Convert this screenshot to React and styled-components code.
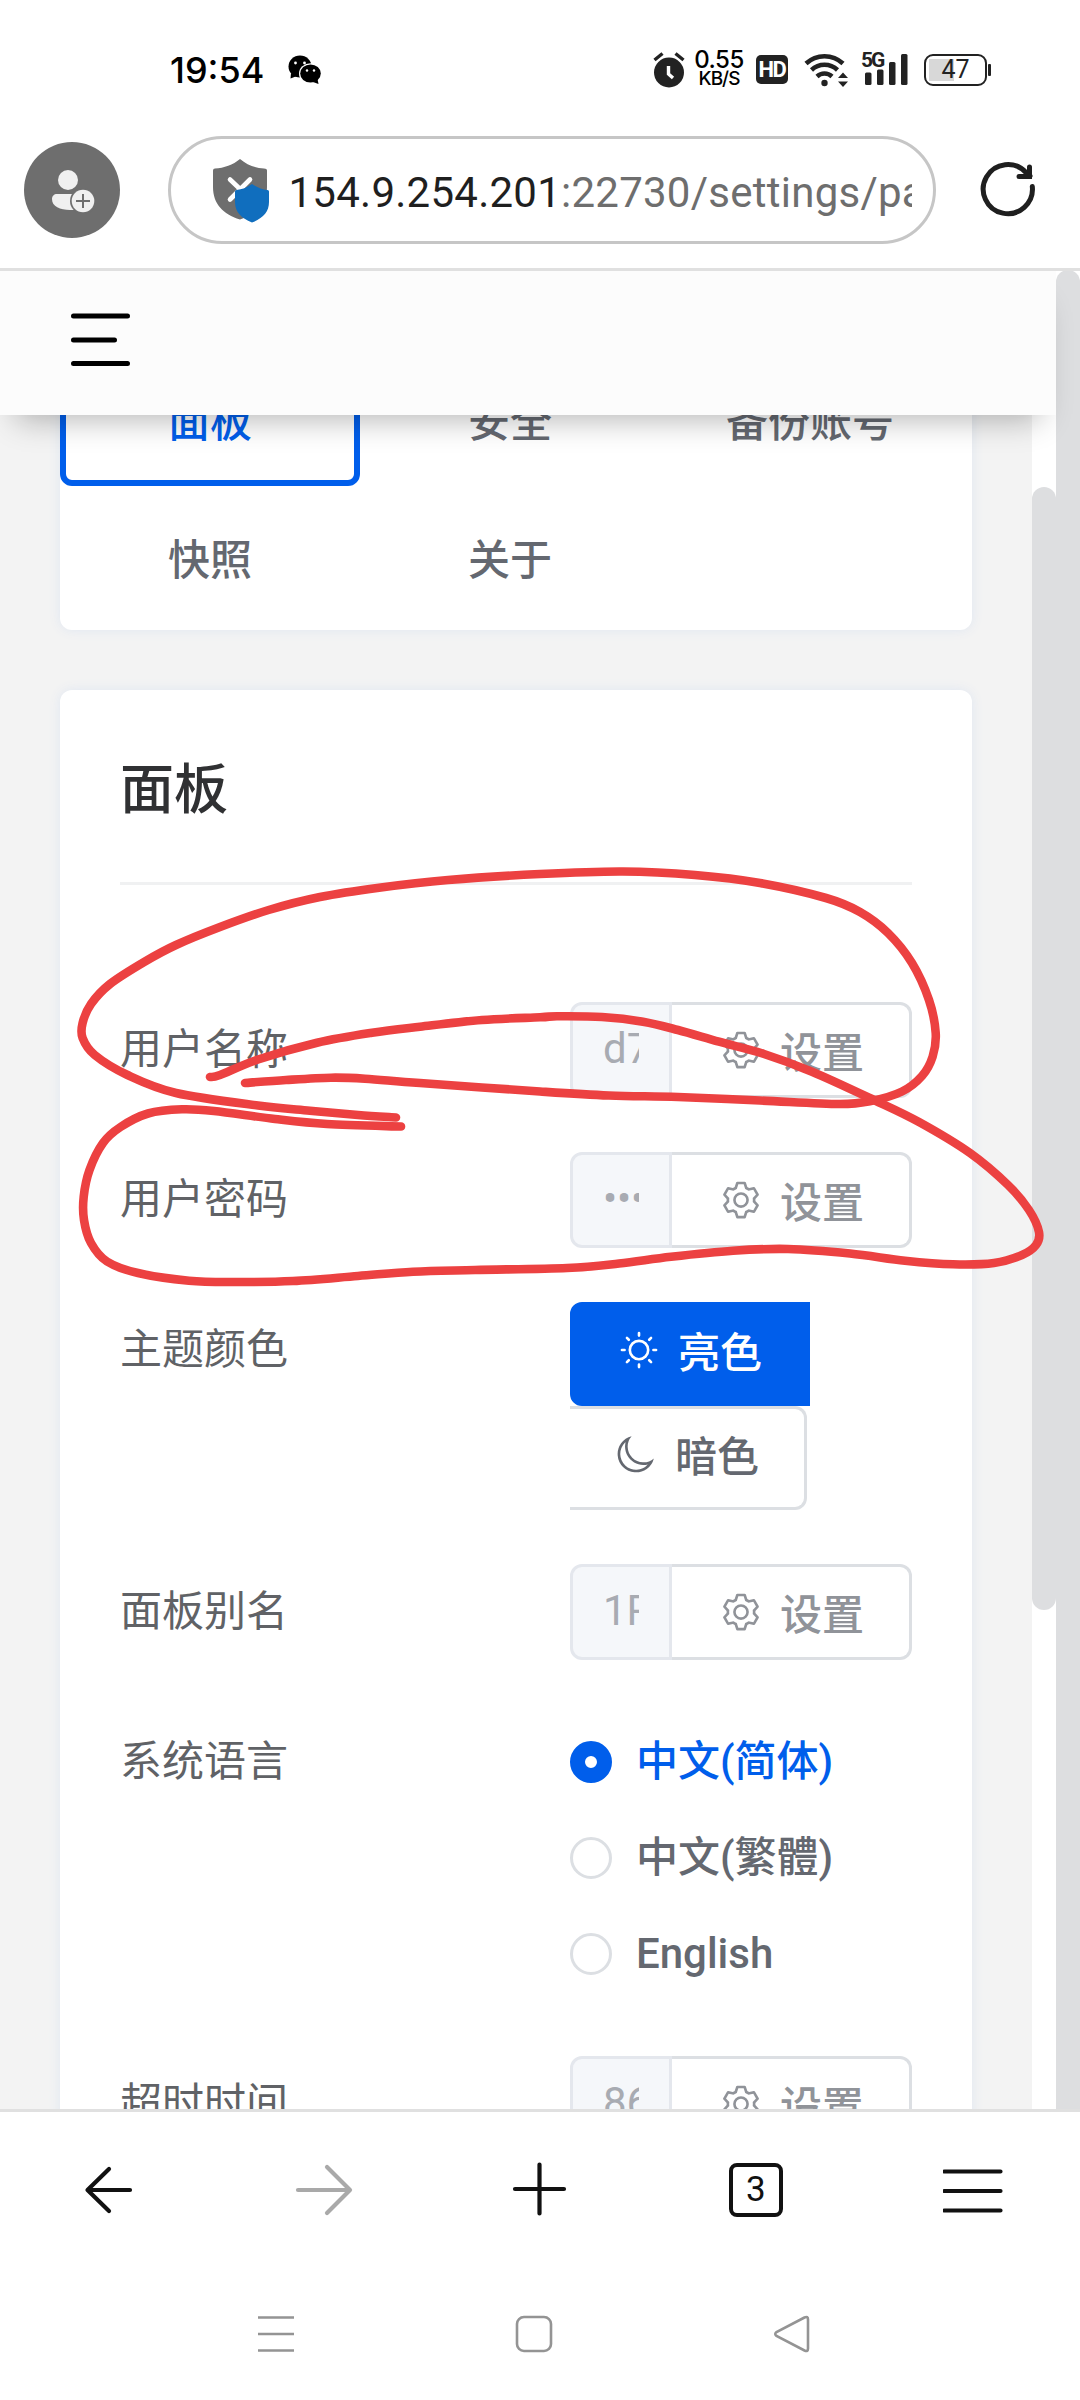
import React, { Fragment } from 'react';
import styled, { createGlobalStyle } from 'styled-components';

const SETTING =
    'M600.704 64a32 32 0 0 1 30.464 22.208l35.2 109.376c14.784 7.232 28.928 15.36 42.432 24.512l112.384-24.192a32 32 0 0 1 34.432 15.36L944.32 364.8a32 32 0 0 1-4.032 37.504l-77.12 85.12a357.12 357.12 0 0 1 0 49.024l77.12 85.248a32 32 0 0 1 4.032 37.504l-88.704 153.6a32 32 0 0 1-34.432 15.296L708.8 803.904c-13.44 9.088-27.648 17.28-42.368 24.512l-35.264 109.376A32 32 0 0 1 600.704 960H423.296a32 32 0 0 1-30.464-22.208L357.696 828.48a351.616 351.616 0 0 1-42.56-24.64l-112.32 24.256a32 32 0 0 1-34.432-15.36L79.68 659.2a32 32 0 0 1 4.032-37.504l77.12-85.248a357.12 357.12 0 0 1 0-48.896l-77.12-85.248A32 32 0 0 1 79.68 364.8l88.704-153.6a32 32 0 0 1 34.432-15.296l112.32 24.256c13.568-9.152 27.776-17.408 42.56-24.64l35.2-109.312A32 32 0 0 1 423.232 64H600.64zm-23.424 64H446.72l-36.352 113.088-24.512 11.968a294.113 294.113 0 0 0-34.816 20.096l-22.656 15.36-116.224-25.088-65.28 113.152 79.68 88.192-1.92 27.136a293.12 293.12 0 0 0 0 40.192l1.92 27.136-79.808 88.192 65.344 113.152 116.224-25.024 22.656 15.296a294.113 294.113 0 0 0 34.816 20.096l24.512 11.968L446.72 896h130.688l36.48-113.152 24.448-11.904a288.282 288.282 0 0 0 34.752-20.096l22.592-15.296 116.288 25.024 65.28-113.152-79.744-88.192 1.92-27.136a293.12 293.12 0 0 0 0-40.256l-1.92-27.136 79.808-88.128-65.344-113.152-116.288 24.96-22.592-15.232a287.616 287.616 0 0 0-34.752-20.096l-24.448-11.904L577.344 128zM512 320a192 192 0 1 1 0 384 192 192 0 0 1 0-384zm0 64a128 128 0 1 0 0 256 128 128 0 0 0 0-256z';
const SUNNY =
    'M512 704a192 192 0 1 0 0-384 192 192 0 0 0 0 384zm0 64a256 256 0 1 1 0-512 256 256 0 0 1 0 512zm0-704a32 32 0 0 1 32 32v64a32 32 0 0 1-64 0V96a32 32 0 0 1 32-32zm0 768a32 32 0 0 1 32 32v64a32 32 0 1 1-64 0v-64a32 32 0 0 1 32-32zM195.2 195.2a32 32 0 0 1 45.248 0l45.248 45.248a32 32 0 1 1-45.248 45.248L195.2 240.448a32 32 0 0 1 0-45.248zm543.104 543.104a32 32 0 0 1 45.248 0l45.248 45.248a32 32 0 0 1-45.248 45.248l-45.248-45.248a32 32 0 0 1 0-45.248zM64 512a32 32 0 0 1 32-32h64a32 32 0 0 1 0 64H96a32 32 0 0 1-32-32zm768 0a32 32 0 0 1 32-32h64a32 32 0 1 1 0 64h-64a32 32 0 0 1-32-32zM195.2 828.8a32 32 0 0 1 0-45.248l45.248-45.248a32 32 0 0 1 45.248 45.248L240.448 828.8a32 32 0 0 1-45.248 0zm543.104-543.104a32 32 0 0 1 0-45.248l45.248-45.248a32 32 0 0 1 45.248 45.248l-45.248 45.248a32 32 0 0 1-45.248 0z';
const MOON =
    'M240.448 240.448a384 384 0 1 0 559.424 525.696 448 448 0 0 1-542.016-542.08 390.592 390.592 0 0 0-17.408 16.384zm181.056 362.048a384 384 0 0 0 525.632 16.384A448 448 0 1 1 405.056 76.8a384 384 0 0 0 16.448 525.696z';

// pen strokes drawn over the two account rows
const strokeName = [
    [245, 1083], [286, 1080], [331, 1077.7], [365, 1078.7], [420, 1083], [540, 1091.5], [609, 1095.5],
    [678, 1097], [760, 1100.5], [839, 1104], [871, 1101], [902, 1091.5], [922, 1076], [932.6, 1056.7],
    [935.7, 1033], [929, 1000], [912, 963], [888, 933], [860, 912], [826, 898], [760, 883], [695, 875],
    [623, 871.5], [540, 874], [448, 880], [379, 887.7], [320, 897], [268.6, 910], [220, 927], [176, 945],
    [145, 961.5], [110, 984], [91, 1004], [82.6, 1023], [82.6, 1038], [94.7, 1055], [127.5, 1075],
    [176, 1093], [258, 1105.5], [310, 1110.7], [358, 1115], [396, 1117.5],
];
const strokePassword = [
    [210, 1077], [220, 1075], [258, 1059.5], [317, 1042.7], [372, 1032.7], [420, 1026.7], [482, 1020],
    [540, 1017.3], [557, 1016.3], [602, 1017], [643, 1021.7], [678, 1030], [719, 1041.7], [764, 1054],
    [812, 1071.7], [874, 1100], [919, 1122], [970, 1153], [1008, 1185], [1029, 1210], [1039, 1232],
    [1036, 1245], [1022, 1255], [994, 1263], [953, 1264.3], [905, 1260.7], [850, 1253.5], [788, 1249],
    [733, 1250.7], [671, 1256.7], [619, 1263.5], [567, 1268], [475, 1270], [413, 1271.7], [358, 1276],
    [293, 1281], [234, 1282], [189, 1280.7], [138, 1273], [107, 1261.5], [91, 1243], [84, 1220],
    [83.7, 1196.7], [89.5, 1170], [103, 1143], [120.5, 1127], [148, 1113.5], [182, 1109.3], [214, 1111],
    [275, 1119], [327, 1124], [401, 1126.5],
];

const smooth = (pts) => {
    let d = `M${pts[0].join(' ')}`;
    for (let i = 0; i < pts.length - 1; i++) {
        const a = pts[i - 1] || pts[i];
        const b = pts[i];
        const c = pts[i + 1];
        const e = pts[i + 2] || c;
        d += `C${b[0] + (c[0] - a[0]) / 6} ${b[1] + (c[1] - a[1]) / 6} ${c[0] - (e[0] - b[0]) / 6} ${c[1] - (e[1] - b[1]) / 6} ${c[0]} ${c[1]}`;
    }
    return d;
};

const ElIcon = ({ d }) => (
    <svg width="42" height="42" viewBox="0 0 1024 1024" fill="currentColor">
        <path d={d} />
    </svg>
);

const Setter = ({ value, masked }) => (
    <InputGroup>
        <InputBox>
            <InputText $masked={masked}>{value}</InputText>
        </InputBox>
        <Append>
            <ElIcon d={SETTING} />
            <span>设置</span>
        </Append>
    </InputGroup>
);

const StatusIcons = () => (
    <Fragment>
        <svg width="32" height="36" viewBox="0 0 32 36">
            <circle cx="16" cy="20.500" r="15" fill="#222" />
            <path d="M1.500 8 9.500 1.500M30.500 8 22.500 1.500" stroke="#222" strokeWidth="3.400" />
            <path d="M15.500 14v8l4.500 4" stroke="#fff" strokeWidth="3.400" fill="none" />
        </svg>
        <Speed>
            <b>0.55</b>
            <small>KB/S</small>
        </Speed>
        <Hd>HD</Hd>
        <Wifi width="45" height="36" viewBox="0 0 45 36">
            <g fill="none" stroke="#222" strokeWidth="4.500">
                <path d="M2 11.500a27 27 0 0 1 37 0" />
                <path d="M7.500 18a19 19 0 0 1 26 0" />
                <path d="M13 24.500a11 11 0 0 1 15 0" />
            </g>
            <circle cx="20.500" cy="31" r="3.200" fill="#222" />
            <path d="M34 26l5-5.500 5 5.500zM34 29.500h10l-5 5.500z" fill="#222" />
        </Wifi>
        <Signal>
            <em>5G</em>
            <svg width="44" height="31" viewBox="0 0 44 31" fill="#222">
                <rect x="0" y="18.500" width="6.500" height="12.500" rx="1.500" />
                <rect x="12" y="15.500" width="6.500" height="15.500" rx="1.500" />
                <rect x="24" y="8" width="6.500" height="23" rx="1.500" />
                <rect x="36" y="0" width="6.500" height="31" rx="1.500" />
            </svg>
        </Signal>
        <Battery>
            <span>47</span>
        </Battery>
    </Fragment>
);

const App = () => {
    return (
        <Fragment>
            <GlobalStyle />
            <Phone>
                <StatusBar>
                    <Clock>19:54</Clock>
                    <WeChat width="34" height="30" viewBox="0 0 34 30">
                        <path d="M3 18 2.500 23.500 9 21z" />
                        <ellipse cx="12" cy="11.500" rx="11.500" ry="11" />
                        <ellipse cx="22.500" cy="18.500" rx="11.500" ry="10.300" fill="#fff" />
                        <path d="M25 27l5.500 2-1-5z" />
                        <ellipse cx="22.500" cy="18.500" rx="10.300" ry="9.100" />
                        <g fill="#fff">
                            <circle cx="7.500" cy="8" r="1.400" />
                            <circle cx="16.500" cy="8" r="1.400" />
                            <circle cx="19" cy="15.500" r="1.200" />
                            <circle cx="26" cy="15.500" r="1.200" />
                        </g>
                    </WeChat>
                    <StatusIcons />
                </StatusBar>

                <AddressBar>
                    <Avatar>
                        <svg width="96" height="96" viewBox="0 0 96 96">
                            <circle cx="44" cy="38" r="10" fill="#f0f0f0" />
                            <path d="M33 52h26v16H46c-10 0-18-3.500-18-11 0-3 2-5 5-5z" fill="#f0f0f0" />
                            <circle cx="59" cy="59" r="13" fill="#6e6e6e" />
                            <circle cx="59" cy="59" r="11.300" fill="#f0f0f0" />
                            <path d="M59 52v14M52 59h14" stroke="#6e6e6e" strokeWidth="2" />
                        </svg>
                    </Avatar>
                    <UrlPill>
                        <svg width="58" height="66" viewBox="0 0 58 66">
                            <path d="M27 0c7 6 15 9 24 9.500q3 0 3 2V28c0 17-10 27-27 32.500C10 55 0 45 0 28V11.500q0-2 2-2C11 9 20 6 27 0z" fill="#6e6e6e" />
                            <path d="M17 20.500l20 19M37 20.500l-20 20" stroke="#fff" strokeWidth="4.600" strokeLinecap="round" />
                            <path d="M39 25c5 3.500 10 5.500 15.500 6q1.500 0 1.500 1.500V43c0 10-6 16-17 20.500C28 59 22 53 22 43V32.500q0-1.500 1.500-1.500c5.500-.5 10.500-2.500 15.500-6z" fill="#106ebe" />
                        </svg>
                        <Url>
                            154.9.254.201<i>:22730/settings/panel</i>
                        </Url>
                    </UrlPill>
                    <svg width="60" height="60" viewBox="0 0 60 60" fill="none" stroke="#1f1f1f" strokeWidth="5" strokeLinecap="round">
                        <path d="M54.300 26.500A24.600 24.600 0 1 1 48 12.500L52 16" />
                        <path d="M51.500 7V16.500H41" strokeLinejoin="miter" />
                    </svg>
                </AddressBar>

                <Viewport>
                    <Main>
                        <PageHeader>
                            <svg width="60" height="54" viewBox="0 0 60 54" stroke="#000" strokeWidth="5" strokeLinecap="round">
                                <path d="M2.500 3h54M2.500 27h41M2.500 50.500h54" />
                            </svg>
                        </PageHeader>
                        <Scroller>
                            <Content>
                                <TabCard>
                                    <Tab $active>面板</Tab>
                                    <Tab>安全</Tab>
                                    <Tab>备份账号</Tab>
                                    <Tab>快照</Tab>
                                    <Tab>关于</Tab>
                                </TabCard>
                                <Card>
                                    <h2>面板</h2>
                                    <FormRow>
                                        <label>用户名称</label>
                                        <Setter value="d7a" />
                                    </FormRow>
                                    <FormRow>
                                        <label>用户密码</label>
                                        <Setter value="••••" masked />
                                    </FormRow>
                                    <FormRow>
                                        <label>主题颜色</label>
                                        <div>
                                            <ThemeButton $active>
                                                <ElIcon d={SUNNY} />
                                                <span>亮色</span>
                                            </ThemeButton>
                                            <ThemeButton>
                                                <ElIcon d={MOON} />
                                                <span>暗色</span>
                                            </ThemeButton>
                                        </div>
                                    </FormRow>
                                    <FormRow>
                                        <label>面板别名</label>
                                        <Setter value="1Panel" />
                                    </FormRow>
                                    <FormRow>
                                        <label>系统语言</label>
                                        <div>
                                            <Radio $checked>中文(简体)</Radio>
                                            <Radio>中文(繁體)</Radio>
                                            <Radio>English</Radio>
                                        </div>
                                    </FormRow>
                                    <FormRow>
                                        <label>超时时间</label>
                                        <Setter value="86400" />
                                    </FormRow>
                                </Card>
                            </Content>
                            <Track>
                                <Thumb />
                            </Track>
                        </Scroller>
                    </Main>
                    <OuterThumb />
                </Viewport>

                <Toolbar>
                    <svg width="60" height="60" viewBox="0 0 60 60" stroke="#111">
                        <path d="M31 9 9.500 30 31 51M10 30h42" />
                    </svg>
                    <svg width="60" height="60" viewBox="0 0 60 60" stroke="#a9a9a9">
                        <path d="M33 7 56 30 33 53M55 30H4" />
                    </svg>
                    <svg width="60" height="60" viewBox="0 0 60 60" stroke="#111">
                        <path d="M28.500 4.500v49M4 29h49" />
                    </svg>
                    <TabCount>3</TabCount>
                    <svg width="60" height="60" viewBox="0 0 60 60" stroke="#111">
                        <path d="M1.500 11.500h56M1.500 31h56M1.500 50.500h56" />
                    </svg>
                </Toolbar>

                <SystemNav>
                    <svg width="40" height="40" viewBox="0 0 40 40">
                        <path d="M2 3.500h36M2 20h36M2 36.500h36" />
                    </svg>
                    <svg width="40" height="40" viewBox="0 0 40 40">
                        <rect x="3" y="3" width="34" height="34" rx="7" />
                    </svg>
                    <svg width="40" height="40" viewBox="0 0 40 40">
                        <path d="M32.500 3.500 4.500 18q-2.500 2 0 4L32.500 36.500q3.500 1.500 3.500-2V5.500q0-3.500-3.500-2z" />
                    </svg>
                </SystemNav>

                <Ink width="1080" height="2400" viewBox="0 0 1080 2400">
                    <path d={smooth(strokeName)} />
                    <path d={smooth(strokePassword)} />
                </Ink>
            </Phone>
        </Fragment>
    );
};

const GlobalStyle = createGlobalStyle`
    *, *::before, *::after {
        box-sizing: border-box;
    }
    body {
        margin: 0;
        background: #fff;
        font-family: Roboto, "Noto Sans CJK SC", sans-serif;
    }
    svg {
        display: block;
        flex-shrink: 0;
    }
`;

const Phone = styled.div`
    position: relative;
    width: 1080px;
    height: 2400px;
    display: flex;
    flex-direction: column;
    overflow: hidden;
    background: #fff;
`;

const StatusBar = styled.div`
    height: 112px;
    padding: 27px 89px 0 170px;
    display: flex;
    align-items: center;
`;

const Clock = styled.div`
    width: 118px;
    font-family: Inter, sans-serif;
    font-size: 36px;
    font-weight: 500;
    color: #000;
`;

const WeChat = styled.svg`
    margin-right: auto;
`;

const Speed = styled.div`
    display: flex;
    flex-direction: column;
    align-items: center;
    gap: 1px;
    width: 52px;
    margin-left: 8px;
    font-family: Inter, sans-serif;
    color: #000;

    b {
        font-size: 24px;
        line-height: 18px;
        font-weight: 500;
        letter-spacing: -0.5px;
    }
    small {
        font-size: 19px;
        line-height: 18px;
        font-weight: 500;
        letter-spacing: -1px;
    }
`;

const Hd = styled.div`
    width: 32px;
    height: 29px;
    margin-left: 11px;
    border-radius: 5px;
    background: #222;
    color: #fff;
    font-size: 22px;
    font-weight: 700;
    line-height: 30px;
    text-align: center;
    letter-spacing: -1.5px;
`;

const Wifi = styled.svg`
    margin-left: 16px;
`;

const Signal = styled.div`
    position: relative;
    margin-left: 16px;

    em {
        position: absolute;
        left: -4px;
        top: -4px;
        font-size: 21px;
        line-height: 21px;
        font-style: normal;
        font-weight: 700;
        letter-spacing: -2px;
        color: #222;
    }
`;

const Battery = styled.div`
    position: relative;
    width: 63px;
    height: 32px;
    margin-left: 15px;
    margin-right: 4px;
    border: 2px solid #222;
    border-radius: 9px;
    background: linear-gradient(#d8d8d8, #d8d8d8) 3px 3px / 25px 22px no-repeat;
    display: flex;
    align-items: center;
    justify-content: center;
    font-size: 25px;
    color: #222;

    &::after {
        content: '';
        position: absolute;
        right: -6px;
        top: 8px;
        width: 3px;
        height: 12px;
        border-radius: 1px;
        background: #222;
    }
`;

const AddressBar = styled.div`
    height: 159px;
    padding: 0 42px 0 24px;
    border-bottom: 3px solid #e0e0e0;
    display: flex;
    align-items: center;
    justify-content: space-between;
`;

const Avatar = styled.div`
    width: 96px;
    height: 96px;
    border-radius: 50%;
    background: #6e6e6e;
`;

const UrlPill = styled.div`
    width: 768px;
    height: 108px;
    margin-left: 5px;
    padding: 4px 21px 0 42px;
    border: 3px solid #c6c6c6;
    border-radius: 54px;
    display: flex;
    align-items: center;
`;

const Url = styled.div`
    flex: 1;
    margin-left: 18px;
    overflow: hidden;
    white-space: nowrap;
    font-size: 42px;
    letter-spacing: 0.25px;
    color: #1f1f1f;

    i {
        font-style: normal;
        color: #6e6e6e;
    }
`;

const Viewport = styled.div`
    height: 1838px;
    display: flex;
    overflow: hidden;
`;

const Main = styled.div`
    width: 1056px;
    display: flex;
    flex-direction: column;
`;

const PageHeader = styled.header`
    position: relative;
    z-index: 1;
    height: 144px;
    flex-shrink: 0;
    padding: 42px 0 0 71px;
    background: #fcfcfc;
    box-shadow: 0 20px 30px -16px rgba(0, 0, 0, 0.3);
`;

const Scroller = styled.div`
    flex: 1;
    min-height: 0;
    display: flex;
`;

const Content = styled.main`
    width: 1032px;
    padding: 0 60px;
    background: #f3f3f3;
    overflow: hidden;
`;

const Track = styled.div`
    width: 24px;
    padding-top: 72px;
    background: #fff;
`;

const Thumb = styled.div`
    height: 1123px;
    border-radius: 12px;
    background: #dddee0;
`;

const OuterThumb = styled.div`
    width: 24px;
    height: 1900px;
    margin-top: -1px;
    border-radius: 12px;
    background: #dddee0;
`;

const Card = styled.section`
    padding: 0 60px;
    border-radius: 12px;
    background: #fff;
    box-shadow: 0 0 12px #dfe6f1;

    h2 {
        margin: 0 0 117px;
        height: 195px;
        padding-top: 4px;
        border-bottom: 3px solid #f0f1f2;
        font-size: 54px;
        font-weight: 500;
        line-height: 194px;
        color: #303133;
    }
`;

const TabCard = styled(Card)`
    margin: -67px 0 60px;
    padding: 6px 0;
    display: grid;
    grid-template-columns: repeat(3, 300px);
    row-gap: 6px;
`;

const Tab = styled.div`
    height: 132px;
    padding-top: 2px;
    border: 6px solid ${(p) => (p.$active ? '#005eeb' : 'transparent')};
    border-radius: 12px;
    font-size: 42px;
    font-weight: 500;
    line-height: 121px;
    text-align: center;
    color: ${(p) => (p.$active ? '#005eeb' : '#646870')};
`;

const FormRow = styled.div`
    display: grid;
    grid-template-columns: 450px 342px;
    margin-bottom: 54px;

    label {
        font-size: 42px;
        line-height: 95px;
        color: #606266;
    }
`;

const InputGroup = styled.div`
    display: flex;
    height: 96px;
`;

const InputBox = styled.div`
    width: 102px;
    padding: 0 33px 0 30px;
    border: 3px solid #e4e7ed;
    border-radius: 12px 0 0 12px;
    background: #f5f7fa;
`;

const InputText = styled.div`
    width: 36px;
    overflow: hidden;
    white-space: nowrap;
    font-size: 42px;
    line-height: 88px;
    letter-spacing: ${(p) => (p.$masked ? '-0.2px' : '0')};
    color: #a8abb2;
`;

const Append = styled.div`
    width: 240px;
    padding: 0 0 0 48px;
    border: 3px solid #dcdfe3;
    border-left: 0;
    border-radius: 0 12px 12px 0;
    background: #fff;
    display: flex;
    align-items: center;
    gap: 18px;
    font-size: 42px;
    font-weight: 500;
    line-height: 80px;
    color: #909399;

    span {
        padding-top: 8px;
    }
`;

const ThemeButton = styled.div`
    width: ${(p) => (p.$active ? 240 : 237)}px;
    height: 104px;
    padding-left: 45px;
    border: 3px solid ${(p) => (p.$active ? '#005eeb' : '#dcdfe3')};
    ${(p) => !p.$active && 'border-left: 0;'}
    border-radius: ${(p) => (p.$active ? '12px 0 0 12px' : '0 12px 12px 0')};
    background: ${(p) => (p.$active ? '#005eeb' : '#fff')};
    color: ${(p) => (p.$active ? '#fff' : '#646870')};
    display: flex;
    align-items: center;
    gap: 18px;
    font-size: 42px;
    font-weight: 500;
    line-height: 84px;

    svg {
        margin-bottom: 8px;
    }
`;

const Radio = styled.div`
    height: 96px;
    display: flex;
    align-items: center;
    font-size: 42px;
    font-weight: 500;
    line-height: 84px;
    color: ${(p) => (p.$checked ? '#005eeb' : '#646870')};

    &::before {
        content: '';
        width: 42px;
        height: 42px;
        margin-right: 24px;
        border: ${(p) => (p.$checked ? '15px solid #005eeb' : '3px solid #dcdfe3')};
        border-radius: 50%;
        background: #fff;
    }
`;

const Toolbar = styled.nav`
    height: 160px;
    padding: 0 77px 2px 78px;
    border-top: 3px solid #e0e0e0;
    display: flex;
    align-items: center;
    justify-content: space-between;

    svg {
        fill: none;
        stroke-width: 4.2;
        stroke-linecap: round;
        stroke-linejoin: round;
    }
`;

const TabCount = styled.div`
    width: 54px;
    height: 54px;
    margin: 0 4px 0 2px;
    border: 4px solid #111;
    border-radius: 8px;
    font-size: 35px;
    line-height: 46px;
    text-align: center;
    color: #111;
`;

const SystemNav = styled.nav`
    flex: 1;
    padding: 45px 268px 0 256px;
    display: flex;
    justify-content: space-between;

    svg {
        fill: none;
        stroke: #949494;
        stroke-width: 2.6;
    }
`;

const Ink = styled.svg`
    position: absolute;
    left: 0;
    top: 0;
    z-index: 2;
    pointer-events: none;
    fill: none;
    stroke: #ec4141;
    stroke-width: 8.6;
    stroke-linecap: round;
    stroke-linejoin: round;
`;

export default App;
